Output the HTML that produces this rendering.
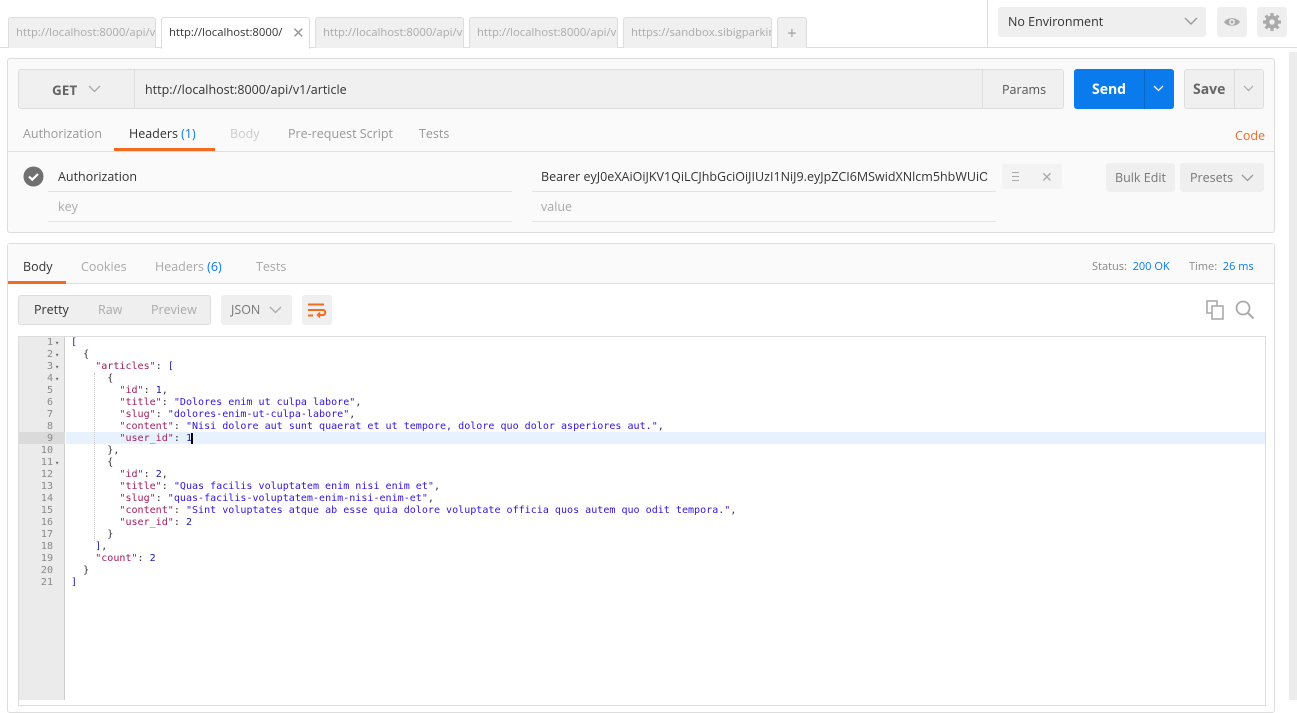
<!DOCTYPE html>
<html><head><meta charset="utf-8"><style>
*{box-sizing:border-box;margin:0;padding:0}
body{width:1297px;height:700px;overflow:hidden;background:#fff;font-family:"Open Sans","Liberation Sans",sans-serif;font-size:12.5px;color:#505050;position:relative}
.a{position:absolute}
.tab{position:absolute;top:17px;height:31px;background:#f0f0f0;border:1px solid #ddd;border-bottom:none;border-radius:3px 3px 0 0;color:#aaa;font-size:11.3px;line-height:30px;padding-left:7px;white-space:nowrap;overflow:hidden}
.btn{position:absolute;background:#efefef;border-radius:3px}
.code{font-family:"DejaVu Sans Mono","Liberation Mono",monospace;font-size:10.05px;line-height:12px;white-space:pre}
.k{color:#a11d5c}.s{color:#3315d9}.n{color:#1a1aa6}.p{color:#333}
</style></head><body>
<div class="a" style="left:0;top:47px;width:1297px;height:1px;background:#ddd"></div>
<div class="a" style="left:987px;top:0;width:1px;height:47px;background:#ddd"></div>
<div class="tab" style="left:8px;width:148px">http://localhost:8000/api/v1</div>
<div class="tab" style="left:161px;width:149px;background:#fff;color:#333;height:32px">http://localhost:8000/<span style="position:absolute;left:128px;color:#999;font-size:15px;background:#fff;padding-left:2px">✕</span></div>
<div class="tab" style="left:315px;width:149px">http://localhost:8000/api/v1</div>
<div class="tab" style="left:469px;width:149px">http://localhost:8000/api/v1</div>
<div class="tab" style="left:623px;width:149px">https://sandbox.sibigparkin</div>
<div class="tab" style="left:777px;width:30px;padding:0;text-align:center;font-size:16px;color:#999">+</div>
<div class="btn" style="left:998px;top:7px;width:208px;height:30px;line-height:30px;padding-left:10px;color:#333">No Environment<svg class="a" style="left:186px;top:10px" width="14" height="9"><path d="M1 1l6 6 6-6" fill="none" stroke="#999" stroke-width="1.4"/></svg></div>
<div class="btn" style="left:1217px;top:7px;width:30px;height:30px"><svg class="a" style="left:6px;top:8px" width="18" height="14"><path d="M1 7C4 2 14 2 17 7 14 12 4 12 1 7z" fill="#aaa"/><circle cx="9" cy="7" r="3" fill="#efefef"/><circle cx="9" cy="7" r="1.5" fill="#aaa"/></svg></div>
<div class="btn" style="left:1257px;top:7px;width:30px;height:30px"><svg class="a" style="left:5px;top:5px" width="20" height="20" viewBox="0 0 20 20"><g fill="#aaa"><circle cx="10" cy="10" r="6.5"/><g stroke="#aaa" stroke-width="3.2"><path d="M10 1v18M1 10h18M3.6 3.6l12.8 12.8M16.4 3.6L3.6 16.4"/></g></g><circle cx="10" cy="10" r="2.7" fill="#efefef"/></svg></div>
<div class="a" style="left:1289px;top:52px;width:8px;height:648px;background:#ececec"></div>

<div class="a" style="left:7px;top:58px;width:1268px;height:175px;background:#fafafa;border:1px solid #ddd;border-radius:3px"></div>
<div class="a" style="left:18px;top:69px;width:1046px;height:40px;background:#f0f0f0;border:1px solid #ddd;border-radius:3px"></div>
<div class="a" style="left:134px;top:70px;width:1px;height:38px;background:#ddd"></div>
<div class="a" style="left:982px;top:70px;width:1px;height:38px;background:#ddd"></div>
<div class="a" style="left:52px;top:81px;font-weight:bold;font-size:13.5px;color:#666">GET</div>
<svg class="a" style="left:88px;top:85px" width="13" height="8"><path d="M1 1l5.5 5.5L12 1" fill="none" stroke="#aaa" stroke-width="1.3"/></svg>
<div class="a" style="left:145px;top:81px;color:#333">http://localhost:8000/api/v1/article</div>
<div class="a" style="left:1002px;top:81px;color:#555">Params</div>
<div class="a" style="left:1074px;top:69px;width:100px;height:40px;background:#097bed;border-radius:3px"></div>
<div class="a" style="left:1144px;top:69px;width:1px;height:40px;background:#0767c9"></div>
<div class="a" style="left:1092px;top:80px;color:#fff;font-size:14px;font-weight:bold">Send</div>
<svg class="a" style="left:1153px;top:85px" width="11" height="7"><path d="M1 1l4.5 4.5L10 1" fill="none" stroke="#fff" stroke-width="1.3"/></svg>
<div class="a" style="left:1184px;top:69px;width:80px;height:40px;background:#f0f0f0;border:1px solid #ddd;border-radius:3px"></div>
<div class="a" style="left:1234px;top:70px;width:1px;height:38px;background:#ddd"></div>
<div class="a" style="left:1193px;top:80px;font-size:14px;font-weight:bold;color:#666">Save</div>
<svg class="a" style="left:1243px;top:85px" width="11" height="7"><path d="M1 1l4.5 4.5L10 1" fill="none" stroke="#aaa" stroke-width="1.2"/></svg>
<div class="a" style="left:23px;top:125px;color:#999">Authorization</div>
<div class="a" style="left:129px;top:125px;color:#333">Headers <span style="color:#097bed">(1)</span></div>
<div class="a" style="left:230px;top:125px;color:#ccc">Body</div>
<div class="a" style="left:288px;top:125px;color:#999">Pre-request Script</div>
<div class="a" style="left:419px;top:125px;color:#999">Tests</div>
<div class="a" style="left:1235px;top:127px;color:#f26b21">Code</div>
<div class="a" style="left:8px;top:151px;width:1266px;height:1px;background:#e0e0e0"></div>
<div class="a" style="left:114px;top:148px;width:101px;height:3px;background:#f26b21"></div>
<svg class="a" style="left:23px;top:166px" width="21" height="21"><circle cx="10.5" cy="10.5" r="10" fill="#707070"/><path d="M6 10.5l3.2 3.2L15 8" fill="none" stroke="#fff" stroke-width="2.2"/></svg>
<div class="a" style="left:58px;top:168px;color:#333">Authorization</div>
<div class="a" style="left:48px;top:191px;width:464px;height:1px;background:#e3e3e3"></div>
<div class="a" style="left:48px;top:221px;width:464px;height:1px;background:#e3e3e3"></div>
<div class="a" style="left:58px;top:198px;color:#aaa">key</div>
<div class="a" style="left:541px;top:168px;color:#333;width:446px;overflow:hidden;white-space:nowrap">Bearer eyJ0eXAiOiJKV1QiLCJhbGciOiJIUzI1NiJ9.eyJpZCI6MSwidXNlcm5hbWUiOiJzdWJqZWN0</div>
<div class="a" style="left:532px;top:191px;width:464px;height:1px;background:#e3e3e3"></div>
<div class="a" style="left:532px;top:221px;width:464px;height:1px;background:#e3e3e3"></div>
<div class="a" style="left:541px;top:198px;color:#aaa">value</div>
<div class="btn" style="left:1002px;top:164px;width:60px;height:25px;background:#f3f3f3"></div>
<div class="a" style="left:1012px;top:172px;width:7px;height:9px;border-top:1.5px solid #aaa;border-bottom:1.5px solid #aaa"><div style="margin-top:2.5px;height:1.5px;background:#aaa"></div></div>
<div class="a" style="left:1041px;top:168px;color:#aaa;font-size:14px">✕</div>
<div class="btn" style="left:1106px;top:163px;width:69px;height:29px;line-height:29px;text-align:center;color:#777">Bulk Edit</div>
<div class="btn" style="left:1180px;top:163px;width:84px;height:29px;line-height:29px;padding-left:10px;color:#777">Presets<svg class="a" style="left:61px;top:11px" width="13" height="8"><path d="M1 1l5.5 5.5L12 1" fill="none" stroke="#999" stroke-width="1.3"/></svg></div>

<div class="a" style="left:7px;top:243px;width:1268px;height:470px;background:#fff;border:1px solid #ddd;border-radius:3px"></div>
<div class="a" style="left:8px;top:244px;width:1266px;height:40px;background:#fafafa;border-bottom:1px solid #e0e0e0"></div>
<div class="a" style="left:8px;top:281px;width:58px;height:3px;background:#f26b21"></div>
<div class="a" style="left:23px;top:258px;color:#333">Body</div>
<div class="a" style="left:81px;top:258px;color:#aaa">Cookies</div>
<div class="a" style="left:155px;top:258px;color:#aaa">Headers <span style="color:#097bed">(6)</span></div>
<div class="a" style="left:256px;top:258px;color:#aaa">Tests</div>
<div class="a" style="left:1092px;top:259px;font-size:11px;color:#888">Status: <span style="color:#097bed">&nbsp;200 OK</span></div>
<div class="a" style="left:1189px;top:259px;font-size:11px;color:#888">Time: <span style="color:#097bed">&nbsp;26 ms</span></div>
<div class="btn" style="left:18px;top:295px;width:193px;height:30px;border:1px solid #ddd;line-height:28px"><span class="a" style="left:15px;color:#333">Pretty</span><span class="a" style="left:79px;color:#aaa">Raw</span><span class="a" style="left:132px;color:#aaa">Preview</span></div>
<div class="btn" style="left:221px;top:295px;width:71px;height:30px;line-height:30px;padding-left:10px;color:#777">JSON<svg class="a" style="left:48px;top:11px" width="13" height="8"><path d="M1 1l5.5 5.5L12 1" fill="none" stroke="#aaa" stroke-width="1.3"/></svg></div>
<div class="btn" style="left:302px;top:295px;width:30px;height:30px"><svg class="a" style="left:5px;top:8px" width="20" height="15"><path d="M1 1.5h16M1 7h15c3 0 3 5 0 5h-4M1 12.5h5" fill="none" stroke="#f26b21" stroke-width="2"/><path d="M13 9.5l-2.5 2.5 2.5 2.5" fill="none" stroke="#f26b21" stroke-width="1.6"/></svg></div>
<svg class="a" style="left:1206px;top:300px" width="19" height="20"><rect x="1" y="1" width="10" height="12" fill="none" stroke="#aaa" stroke-width="1.6"/><rect x="6" y="6" width="11" height="13" fill="#fff" stroke="#aaa" stroke-width="1.6"/></svg>
<svg class="a" style="left:1235px;top:300px" width="20" height="20"><circle cx="8" cy="8" r="6.5" fill="none" stroke="#aaa" stroke-width="1.8"/><path d="M12.5 12.5l6 6" stroke="#aaa" stroke-width="2"/></svg>
<div class="a" style="left:18px;top:336px;width:1248px;height:370px;border:1px solid #ddd;background:#fff"></div>
<div class="a" style="left:19px;top:337px;width:46px;height:363px;background:#ebebeb;border-right:1px solid #ccc"></div>
<div class="a" style="left:19px;top:432px;width:46px;height:12px;background:#dadada"></div>
<div class="a" style="left:66px;top:432px;width:1199px;height:12px;background:#e8f2fe"></div>
<div class="a" style="left:94px;top:373px;width:1px;height:168px;border-left:1px dotted #ccc"></div>
<div class="a code" style="left:19px;top:337px;width:34px;text-align:right;color:#888">1
2
3
4
5
6
7
8
9
10
11
12
13
14
15
16
17
18
19
20
21</div>
<div class="a code" style="left:55px;top:337px;color:#666;font-size:7px;line-height:12px">▾
▾
▾
▾






▾</div>
<div class="a code" style="left:71px;top:337px;color:#333"><span class="n">[</span>
  {
    <span class="k">"articles"</span>: <span class="n">[</span>
      {
        <span class="k">"id"</span>: <span class="n">1</span>,
        <span class="k">"title"</span>: <span class="s">"Dolores enim ut culpa labore"</span>,
        <span class="k">"slug"</span>: <span class="s">"dolores-enim-ut-culpa-labore"</span>,
        <span class="k">"content"</span>: <span class="s">"Nisi dolore aut sunt quaerat et ut tempore, dolore quo dolor asperiores aut."</span>,
        <span class="k">"user_id"</span>: <span class="n">1</span><span style="border-left:2px solid #000;margin-left:-1px"></span>
      },
      {
        <span class="k">"id"</span>: <span class="n">2</span>,
        <span class="k">"title"</span>: <span class="s">"Quas facilis voluptatem enim nisi enim et"</span>,
        <span class="k">"slug"</span>: <span class="s">"quas-facilis-voluptatem-enim-nisi-enim-et"</span>,
        <span class="k">"content"</span>: <span class="s">"Sint voluptates atque ab esse quia dolore voluptate officia quos autem quo odit tempora."</span>,
        <span class="k">"user_id"</span>: <span class="n">2</span>
      }
    <span class="n">]</span>,
    <span class="k">"count"</span>: <span class="n">2</span>
  }
<span class="n">]</span></div>
</body></html>
